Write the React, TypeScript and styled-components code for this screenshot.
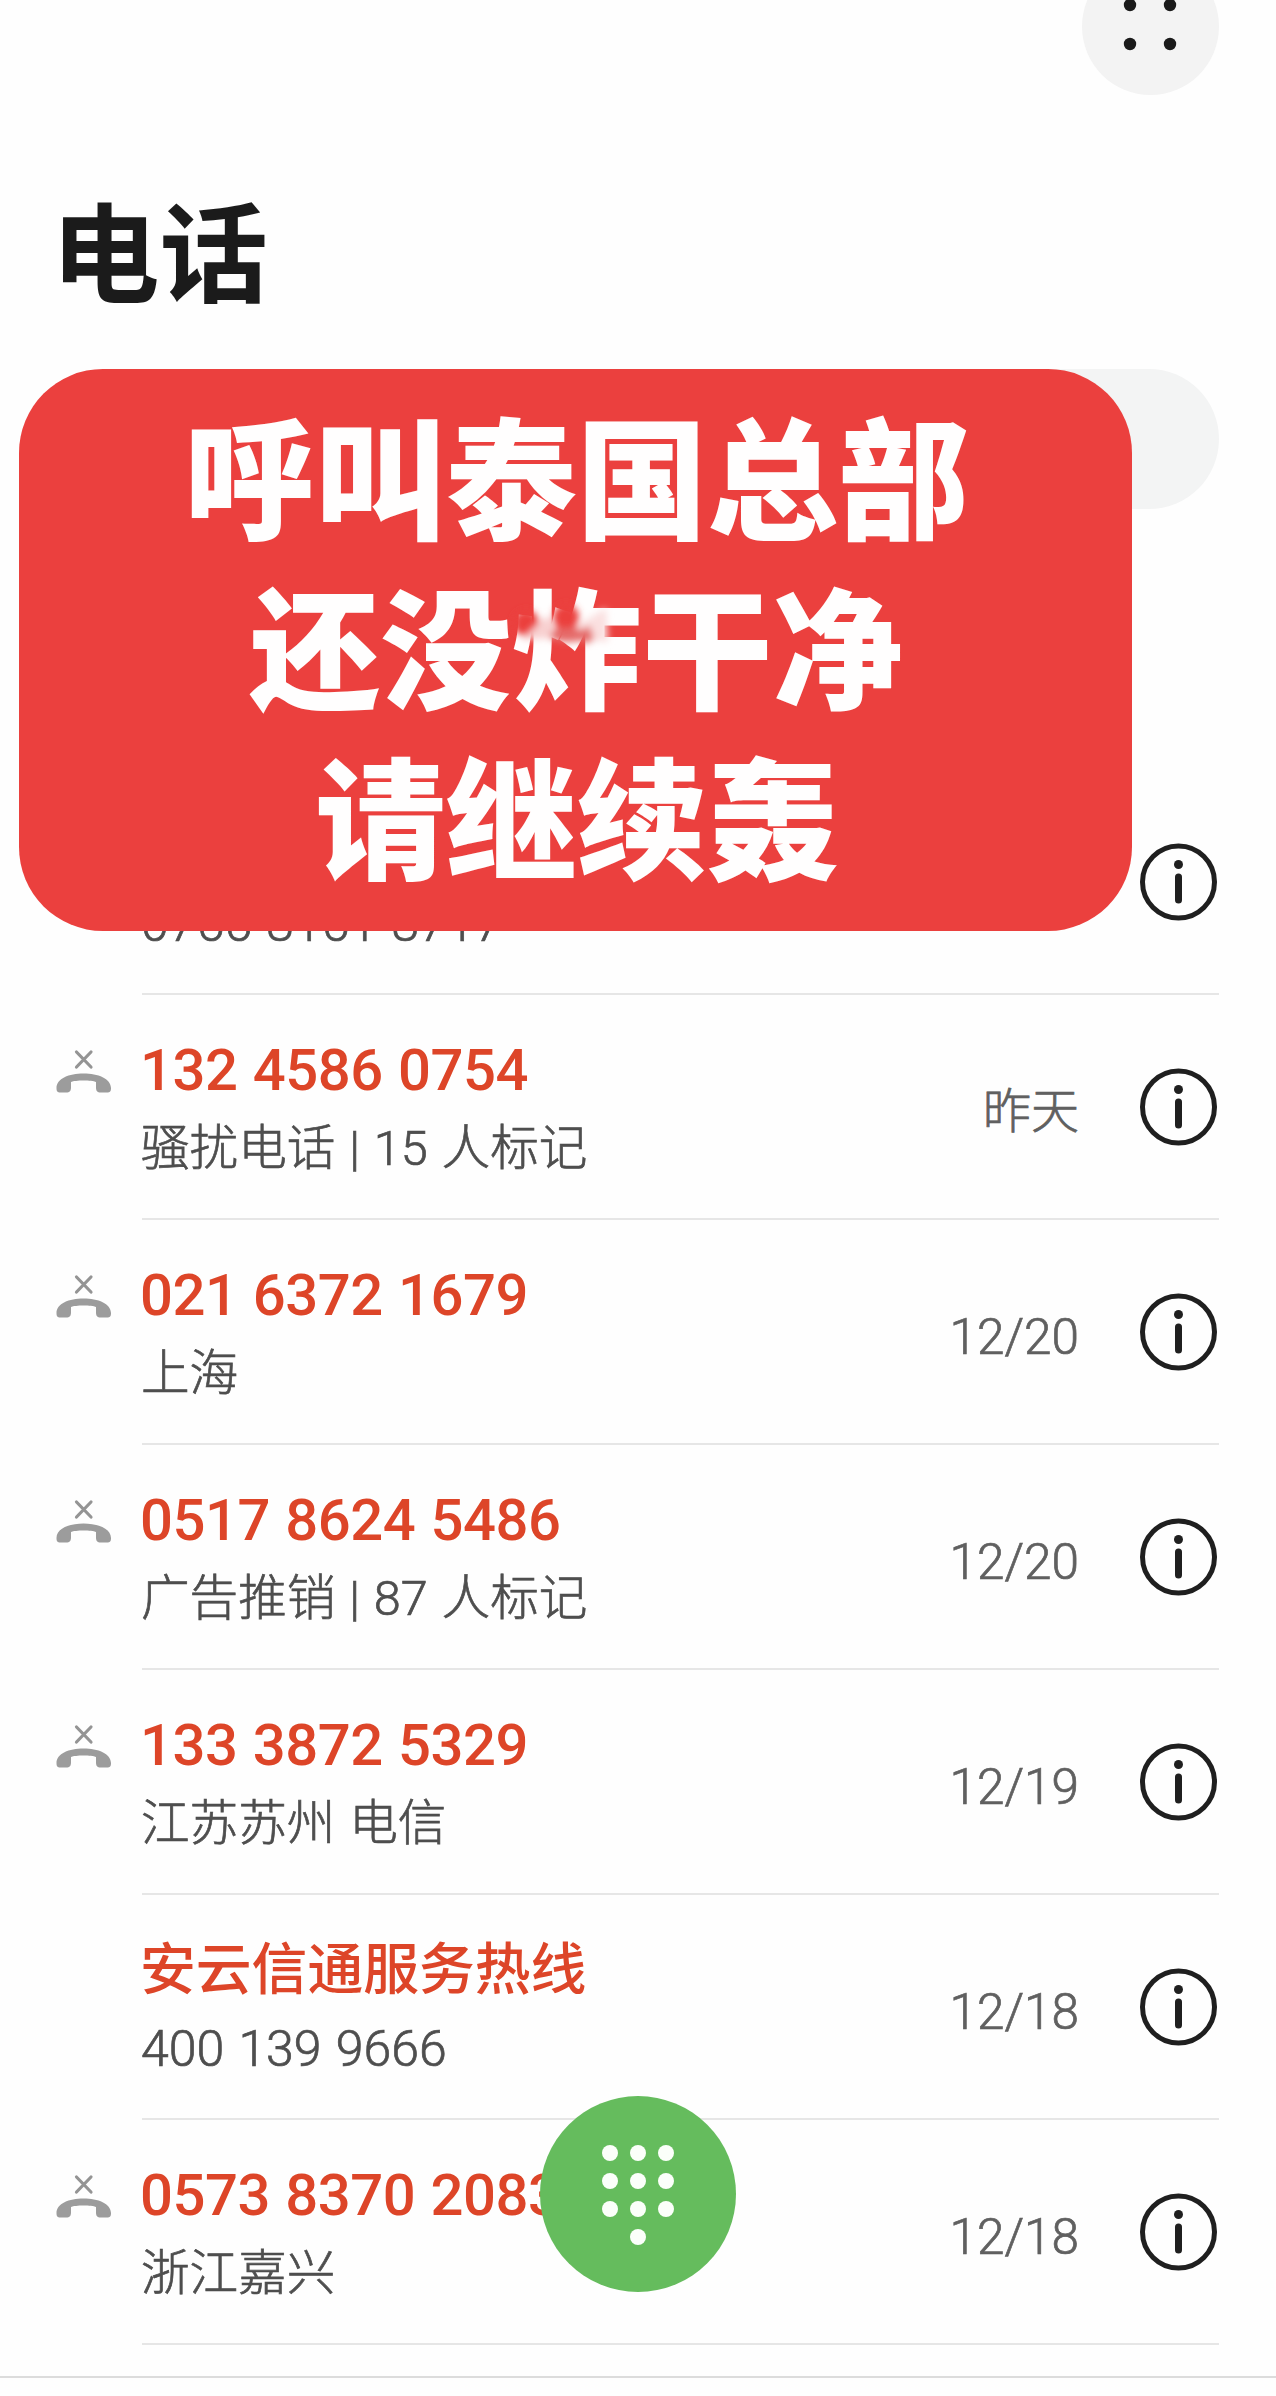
import React from "react";
import styled, { createGlobalStyle } from "styled-components";

const GlobalStyle = createGlobalStyle`
  * { box-sizing: border-box; }
  body { margin: 0; background: #fefefe; }
`;

const Screen = styled.main`
  position: relative;
  width: 1276px;
  height: 2396px;
  overflow: hidden;
  display: flex;
  flex-direction: column;
  background: #fefefe;
  color: #1a1a1a;
  font-family: Roboto, "Noto Sans CJK SC", sans-serif;
`;

const TopBar = styled.header`
  display: flex;
  justify-content: flex-end;
  height: 95px;
  padding-right: 57px;
  align-items: flex-end;
  flex: none;
`;

const MenuButton = styled.button`
  width: 137px;
  height: 137px;
  flex: none;
  padding: 0;
  border: 0;
  border-radius: 50%;
  background: #f3f3f3;
  display: block;
`;

const Title = styled.h1`
  margin: 92px 0 0;
  padding-left: 51px;
  height: 140px;
  line-height: 140px;
  font-size: 108.5px;
  font-weight: 700;
  color: #1b1b1b;
  flex: none;
`;

const SearchField = styled.div`
  margin: 42px 57px 0;
  height: 140px;
  border-radius: 70px;
  background: #f3f4f4;
  flex: none;
`;

const CallList = styled.ul`
  list-style: none;
  margin: 261px 0 0;
  padding: 0;
  flex: none;
`;

const CallRow = styled.li`
  display: grid;
  grid-template-columns: 142px 1fr;
  height: 225px;
`;

const Status = styled.div`
  padding: 53px 0 0 55px;
`;

const Body = styled.div`
  display: grid;
  grid-template-columns: 1fr auto 140px;
  margin-right: 57px;
  border-bottom: 2px solid #e6e6e6;
`;

const Texts = styled.div`
  padding-top: 36px;
  margin-left: -2px;
  white-space: nowrap;
`;

const Caller = styled.div<{ $cjk?: boolean }>`
  height: 80px;
  line-height: 78px;
  font-size: ${(p) => (p.$cjk ? 55.8 : 58)}px;
  letter-spacing: ${(p) => (p.$cjk ? "0" : "-0.5px")};
  word-spacing: 1.5px;
  font-weight: 500;
  color: #dd4528;
`;

const Detail = styled.div<{ $numeric?: boolean }>`
  height: 76px;
  line-height: 76px;
  padding-left: 1px;
  font-size: ${(p) => (p.$numeric ? 50 : 48.6)}px;
  font-weight: 300;
  word-spacing: 2px;
  color: #4e4e4e;
  -webkit-text-stroke: 0.7px #4e4e4e;
`;

const When = styled.time<{ $cjk?: boolean }>`
  padding-top: 79px;
  height: 156px;
  line-height: 76px;
  font-size: ${(p) => (p.$cjk ? 48 : 49.5)}px;
  font-weight: 300;
  color: #606060;
  -webkit-text-stroke: 0.7px #606060;
`;

const InfoButton = styled.button`
  width: 80px;
  height: 80px;
  padding: 0;
  border: 0;
  background: none;
  margin: 72px 0 0 60px;
`;

const TabBar = styled.nav`
  margin-top: 31px;
  height: 20px;
  border-top: 2px solid #dcdcdc;
  flex: none;
`;

const Banner = styled.aside`
  position: absolute;
  left: 19px;
  top: 369px;
  width: 1113px;
  height: 562px;
  border-radius: 84px;
  background: #eb403e;
  padding: 18px 0 0 2px;
  text-align: center;
`;

const BannerLine = styled.p`
  margin: 0;
  height: 170px;
  line-height: 170px;
  font-size: 130.8px;
  font-weight: 900;
  color: #fffefe;
  font-family: "Noto Sans CJK SC", sans-serif;
`;

const Smudge = styled.svg`
  position: absolute;
  left: 481px;
  top: 221px;
`;

const DialButton = styled.button`
  position: absolute;
  left: 540px;
  top: 2096px;
  width: 196px;
  height: 196px;
  padding: 0;
  border: 0;
  border-radius: 50%;
  background: #65bc5d;
`;

const MissedIcon = () => (
  <svg width="58" height="48" viewBox="0 0 58 48" display="block">
    <path d="M21.500 4 L36 19 M36 4 L21.500 19" stroke="#949494" strokeWidth="3.200" strokeLinecap="round" />
    <path
      d="M1.500 40 C1.500 30.500 14 25.500 28.500 25.500 C43 25.500 56 30.500 56 40 C56 43.500 55 44.500 52 44.500 H46 C42 44.500 41 42.500 41 39.500 V34 C37 32 20 32 16 34 V39.500 C16 42.500 15 44.500 11 44.500 H5.500 C2.500 44.500 1.500 43.500 1.500 40 Z"
      fill="#9c9c9c"
    />
  </svg>
);

const InfoIcon = () => (
  <svg width="80" height="80" viewBox="0 0 80 80" display="block">
    <circle cx="39.500" cy="40" r="36" fill="none" stroke="#1f1f1f" strokeWidth="5" />
    <circle cx="39.500" cy="22.500" r="4.500" fill="#1f1f1f" />
    <path d="M39.500 35 V58" stroke="#1f1f1f" strokeWidth="7" strokeLinecap="round" />
  </svg>
);

const calls = [
  { caller: "", detail: "0755 8151 8717", when: "", missed: false, numeric: true },
  { caller: "132 4586 0754", detail: "骚扰电话 | 15 人标记", when: "昨天", missed: true, cjkWhen: true },
  { caller: "021 6372 1679", detail: "上海", when: "12/20", missed: true },
  { caller: "0517 8624 5486", detail: "广告推销 | 87 人标记", when: "12/20", missed: true },
  { caller: "133 3872 5329", detail: "江苏苏州 电信", when: "12/19", missed: true },
  { caller: "安云信通服务热线", detail: "400 139 9666", when: "12/18", missed: false, numeric: true, cjk: true },
  { caller: "0573 8370 2083", detail: "浙江嘉兴", when: "12/18", missed: true },
];

const bannerLines = ["呼叫泰国总部", "还没炸干净", "请继续轰"];

const keypadDots = [
  [0, 0], [1, 0], [2, 0],
  [0, 1], [1, 1], [2, 1],
  [0, 2], [1, 2], [2, 2],
  [1, 3],
];

export default function App() {
  return (
    <>
      <GlobalStyle />
      <Screen>
        <TopBar>
          <MenuButton aria-label="menu">
            <svg width="137" height="137" viewBox="0 0 137 137" display="block">
              {[48, 88].map((x) => [47, 86].map((y) => <circle key={`${x}-${y}`} cx={x} cy={y} r="6.200" fill="#1a1a1a" />))}
            </svg>
          </MenuButton>
        </TopBar>
        <Title>电话</Title>
        <SearchField />
        <CallList>
          {calls.map((c, i) => (
            <CallRow key={i}>
              <Status>{c.missed && <MissedIcon />}</Status>
              <Body>
                <Texts>
                  <Caller $cjk={c.cjk}>{c.caller}</Caller>
                  <Detail $numeric={c.numeric}>{c.detail}</Detail>
                </Texts>
                <When $cjk={c.cjkWhen}>{c.when}</When>
                <InfoButton aria-label="info">
                  <InfoIcon />
                </InfoButton>
              </Body>
            </CallRow>
          ))}
        </CallList>
        <TabBar />
        <Banner>
          {bannerLines.map((l) => (
            <BannerLine key={l}>{l}</BannerLine>
          ))}
          <Smudge width="130" height="70" viewBox="0 0 130 70">
            <defs>
              <filter id="soft" x="-50%" y="-50%" width="200%" height="200%">
                <feGaussianBlur stdDeviation="3.500" />
              </filter>
            </defs>
            <g filter="url(#soft)">
              <ellipse cx="26" cy="33" rx="13" ry="13" fill="#eb403e" />
              <ellipse cx="66" cy="28" rx="13" ry="14" fill="#eb403e" />
              <ellipse cx="68" cy="45" rx="20" ry="7" fill="#e56a69" />
              <path d="M76 36 L106 18 L108 52 L92 50 Z" fill="#fae0e0" />
              <path d="M22 50 L46 26 L54 34 L50 48 Z" fill="#f8d0d0" />
              <path d="M80 40 L90 36 L94 50 L84 54 Z" fill="#e56a69" />
            </g>
          </Smudge>
        </Banner>
        <DialButton aria-label="dial">
          <svg width="196" height="196" viewBox="0 0 196 196" display="block">
            {keypadDots.map(([x, y]) => (
              <circle key={`${x}-${y}`} cx={70 + x * 28} cy={57 + y * 28} r="8" fill="#fbfffa" />
            ))}
          </svg>
        </DialButton>
      </Screen>
    </>
  );
}
